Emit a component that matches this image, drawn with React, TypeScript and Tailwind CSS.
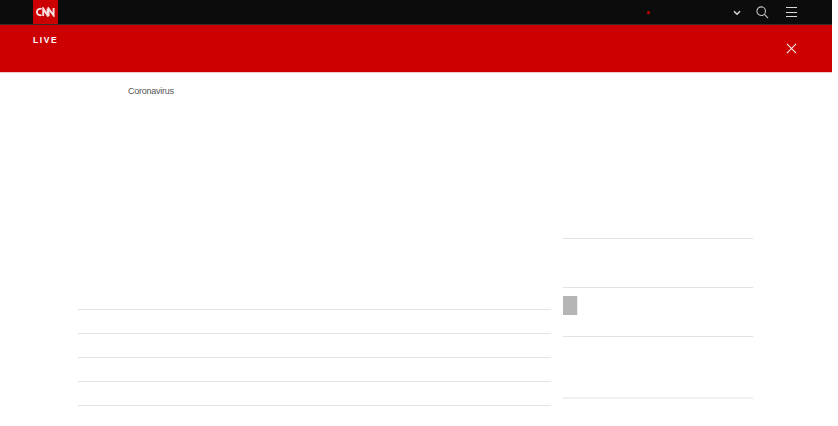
import React from "react";

const Rule = ({ className = "h-px bg-[#e3e3e3]" }: { className?: string }) => (
  <div className={className} />
);

export default function App() {
  return (
    <div className="w-[832px] h-[426px] overflow-hidden bg-white font-['Liberation_Sans',Arial,sans-serif]">
      <header className="h-[25px] bg-[#0c0c0c] border-b border-[#3a2a2a] flex items-stretch pl-[33px] pr-[35px]">
        <div className="w-[25px] bg-[#cc0000] flex items-center justify-center">
          <svg width="20" height="10" viewBox="0 0 20 10" fill="none" stroke="#f6e0e0" strokeWidth="1.9">
            <path d="M5.6 2 A3.3 3.3 0 1 0 5.6 8 M7.2 9 V1.5 L11.6 8.5 V1.5 M12.6 9 V1.5 L17.6 8.5 V1" />
          </svg>
        </div>
        <div className="flex-1" />
        <div className="flex items-center">
          <div className="w-[3px] h-[3px] rounded-full bg-[#cc0000] mr-[83px] mt-px" />
          <svg width="8" height="6" viewBox="0 0 8 6" fill="none" stroke="#d8d8d8" strokeWidth="1.5" className="mr-[15px] mt-px">
            <path d="M1 1.2 L4 4.2 L7 1.2" />
          </svg>
          <svg width="13" height="13" viewBox="0 0 14 14" fill="none" stroke="#c4c4c4" strokeWidth="1.2" className="mr-[17px]">
            <circle cx="5.6" cy="5.6" r="4.6" />
            <path d="M9 9 L13 13" />
          </svg>
          <div className="w-[11px] flex flex-col gap-[3.5px]">
            <div className="h-px bg-[#d8d8d8]" />
            <div className="h-px bg-[#d8d8d8]" />
            <div className="h-px bg-[#d8d8d8]" />
          </div>
        </div>
      </header>

      <section className="h-[48px] bg-[#cc0000] border-b border-[#f2c8c8] flex pl-[33px] pr-[35px]">
        <div className="pt-[10px] text-[8.5px] leading-[10px] font-bold tracking-[1.6px] text-white">LIVE</div>
        <div className="flex-1" />
        <div className="flex items-center">
          <svg width="11" height="11" viewBox="0 0 12 12" stroke="#f8e8e8" strokeWidth="1.2" fill="none">
            <path d="M1 1 L11 11 M11 1 L1 11" />
          </svg>
        </div>
      </section>

      <main className="flex pl-[78px]">
        <div className="w-[473px] mr-[12px]">
          <p className="pl-[50px] pt-[12px] text-[9px] leading-[12px] tracking-[-0.25px] text-[#555555]">Coronavirus</p>
          <div className="h-[212px]" />
          <Rule />
          <div className="h-[23px]" />
          <Rule />
          <div className="h-[23px]" />
          <Rule />
          <div className="h-[23px]" />
          <Rule />
          <div className="h-[23px]" />
          <Rule />
        </div>
        <div className="w-[190px] pt-[165px]">
          <Rule />
          <div className="h-[48px]" />
          <Rule />
          <div className="h-[48px] pt-[8px]">
            <div className="w-[15px] h-[19px] bg-[#b5b5b5] border-r border-[#ececec]" />
          </div>
          <Rule />
          <div className="h-[60px]" />
          <Rule className="h-[2px] bg-[#f0f0f0]" />
        </div>
      </main>
    </div>
  );
}
